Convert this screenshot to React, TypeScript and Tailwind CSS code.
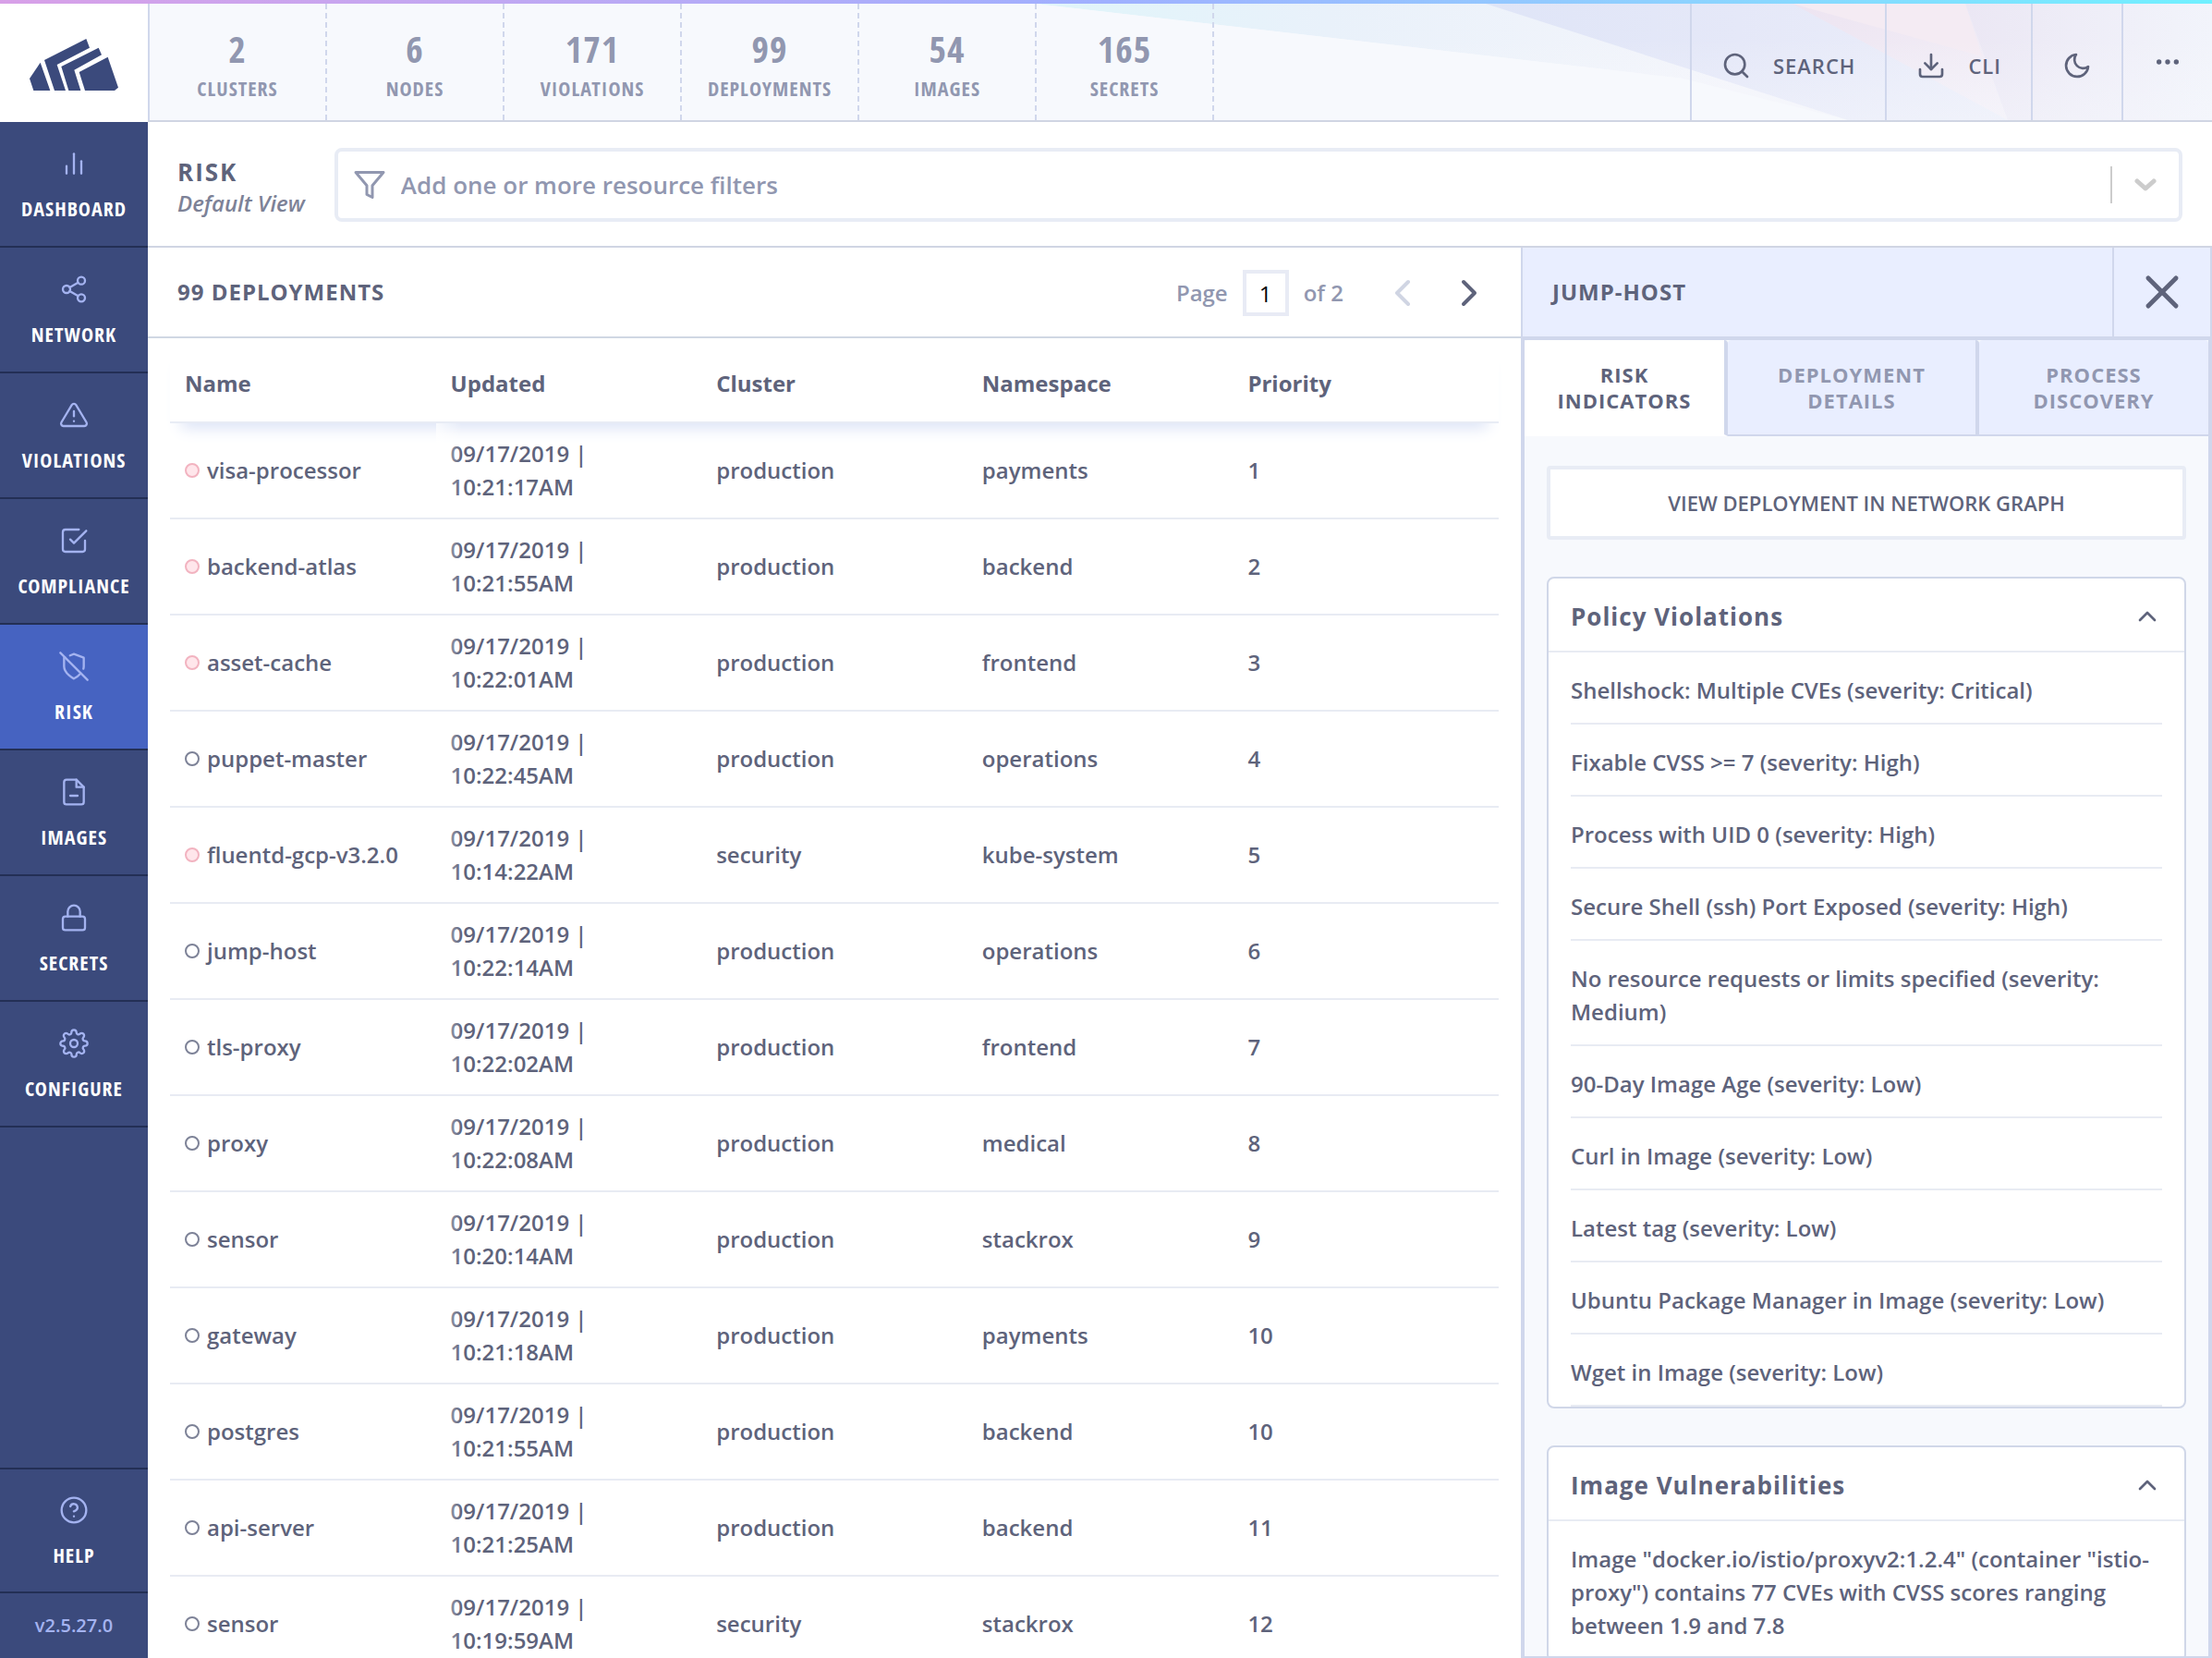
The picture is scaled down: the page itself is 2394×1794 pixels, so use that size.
import { useState } from "react";
import clsx from "clsx";
import {
	FiAlertTriangle,
	FiBarChart2,
	FiCheckSquare,
	FiChevronLeft,
	FiChevronRight,
	FiChevronUp,
	FiDownload,
	FiFileMinus,
	FiFilter,
	FiHelpCircle,
	FiLock,
	FiMoon,
	FiMoreHorizontal,
	FiSearch,
	FiSettings,
	FiShare2,
	FiShieldOff,
	FiX,
} from "react-icons/fi";

const navItems = [
	{ label: "Dashboard", Icon: FiBarChart2 },
	{ label: "Network", Icon: FiShare2 },
	{ label: "Violations", Icon: FiAlertTriangle },
	{ label: "Compliance", Icon: FiCheckSquare },
	{ label: "Risk", Icon: FiShieldOff },
	{ label: "Images", Icon: FiFileMinus },
	{ label: "Secrets", Icon: FiLock },
	{ label: "Configure", Icon: FiSettings },
];

const stats = [
	{ value: 2, label: "Clusters" },
	{ value: 6, label: "Nodes" },
	{ value: 171, label: "Violations" },
	{ value: 99, label: "Deployments" },
	{ value: 54, label: "Images" },
	{ value: 165, label: "Secrets" },
];

const columns = ["Name", "Updated", "Cluster", "Namespace", "Priority"];

const deployments = [
	{ name: "visa-processor", time: "10:21:17AM", cluster: "production", namespace: "payments", priority: 1, flagged: true },
	{ name: "backend-atlas", time: "10:21:55AM", cluster: "production", namespace: "backend", priority: 2, flagged: true },
	{ name: "asset-cache", time: "10:22:01AM", cluster: "production", namespace: "frontend", priority: 3, flagged: true },
	{ name: "puppet-master", time: "10:22:45AM", cluster: "production", namespace: "operations", priority: 4, flagged: false },
	{ name: "fluentd-gcp-v3.2.0", time: "10:14:22AM", cluster: "security", namespace: "kube-system", priority: 5, flagged: true },
	{ name: "jump-host", time: "10:22:14AM", cluster: "production", namespace: "operations", priority: 6, flagged: false },
	{ name: "tls-proxy", time: "10:22:02AM", cluster: "production", namespace: "frontend", priority: 7, flagged: false },
	{ name: "proxy", time: "10:22:08AM", cluster: "production", namespace: "medical", priority: 8, flagged: false },
	{ name: "sensor", time: "10:20:14AM", cluster: "production", namespace: "stackrox", priority: 9, flagged: false },
	{ name: "gateway", time: "10:21:18AM", cluster: "production", namespace: "payments", priority: 10, flagged: false },
	{ name: "postgres", time: "10:21:55AM", cluster: "production", namespace: "backend", priority: 10, flagged: false },
	{ name: "api-server", time: "10:21:25AM", cluster: "production", namespace: "backend", priority: 11, flagged: false },
	{ name: "sensor", time: "10:19:59AM", cluster: "security", namespace: "stackrox", priority: 12, flagged: false },
];

const tabs = ["Risk Indicators", "Deployment Details", "Process Discovery"];

const policyViolations = [
	"Shellshock: Multiple CVEs (severity: Critical)",
	"Fixable CVSS >= 7 (severity: High)",
	"Process with UID 0 (severity: High)",
	"Secure Shell (ssh) Port Exposed (severity: High)",
	"No resource requests or limits specified (severity: Medium)",
	"90-Day Image Age (severity: Low)",
	"Curl in Image (severity: Low)",
	"Latest tag (severity: Low)",
	"Ubuntu Package Manager in Image (severity: Low)",
	"Wget in Image (severity: Low)",
];

const imageVulnerabilities = [
	'Image "docker.io/istio/proxyv2:1.2.4" (container "istio-proxy") contains 77 CVEs with CVSS scores ranging between 1.9 and 7.8',
];

function Logo() {
	return (
		<svg viewBox="36 66 288 168" className="w-24 h-14" fill="#3b4a7c" role="img" aria-label="StackRox">
			<path d="M71 143 103 234H49L36 195Z" />
			<path d="M84 135 220 66 231 95 125 150 153 234H117Z" />
			<path d="M139 156 260 95 270 118 181 167 202 234H163Z" />
			<path d="M197 174 290 125 324 224 312 234H216Z" />
		</svg>
	);
}

// Translucent facets behind the right half of the top bar
function HeaderFacets() {
	return (
		<svg viewBox="0 0 1274 128" preserveAspectRatio="none" className="absolute top-0 right-0 w-[1274px] h-full" aria-hidden="true">
			<defs>
				<linearGradient id="facet-cyan" x1="0" y1="0" x2="1" y2="0">
					<stop offset="0" stopColor="#e0f5fa" />
					<stop offset="0.25" stopColor="#e9f1fa" />
					<stop offset="0.6" stopColor="#f4f5fb" />
				</linearGradient>
				<linearGradient id="facet-blue" x1="0" y1="0" x2="1" y2="0">
					<stop offset="0" stopColor="#dfe5f7" />
					<stop offset="0.35" stopColor="#e5e8f8" />
					<stop offset="1" stopColor="#f1f3fb" />
				</linearGradient>
				<linearGradient id="facet-pink" x1="0" y1="0" x2="1" y2="1">
					<stop offset="0" stopColor="#ede4f1" />
					<stop offset="1" stopColor="#f3f0f8" />
				</linearGradient>
				<linearGradient id="facet-lilac" x1="0" y1="0" x2="1" y2="0">
					<stop offset="0" stopColor="#ebe7f4" />
					<stop offset="1" stopColor="#f2f4fb" />
				</linearGradient>
				<linearGradient id="facet-fade" x1="0" y1="0" x2="0" y2="1">
					<stop offset="0.3" stopColor="#f7f9fd" stopOpacity="0" />
					<stop offset="1" stopColor="#f7f9fd" stopOpacity="0.4" />
				</linearGradient>
			</defs>
			<path d="M0 0H1274V128H880L700 82Z" fill="url(#facet-cyan)" />
			<path d="M0 0 700 82 880 128H0Z" fill="#f7f9fd" />
			<path d="M488 0H1274V128H880Z" fill="url(#facet-blue)" />
			<path d="M820 0H1007L1053 128Z" fill="url(#facet-pink)" />
			<path d="M820 0H1007L1025 58Z" fill="#f4ebf3" />
			<path d="M1007 0H1274V128H1053Z" fill="url(#facet-lilac)" />
			<path d="M0 0H1274V128H0Z" fill="url(#facet-fade)" />
		</svg>
	);
}

function TopBar() {
	return (
		<header className="relative flex-none flex h-32 bg-[#f7f9fd] border-b-2 border-[#d0d5e3]">
			<HeaderFacets />
			<a href="#home" className="relative flex-none w-40 -mb-0.5 pt-1 flex items-center justify-center bg-white">
				<Logo />
			</a>
			<ul className="relative flex border-l-2 border-[#d0d7ec]">
				{stats.map(({ value, label }) => (
					<li key={label} className="w-48 border-r-2 border-dashed border-[#d0d7ec]">
						<a href="#stat" className="h-full pt-3 flex flex-col items-center justify-center gap-1 font-['Open_Sans_Condensed','Open_Sans',sans-serif] font-bold uppercase text-[#9197b0] tracking-[1px]">
							<span className="text-[40px] leading-10">{value}</span>
							<span className="text-[22px] leading-9">{label}</span>
						</a>
					</li>
				))}
			</ul>
			<div className="relative ml-auto flex text-[22px] tracking-[1px] [&>button]:border-l-2 [&>button]:border-[#d0d7ec]">
				<button className="flex items-center gap-6 px-8 pt-2 uppercase">
					<FiSearch size={32} strokeWidth={2} />
					Search
				</button>
				<button className="flex items-center gap-6 px-8 pt-2 uppercase">
					<FiDownload size={32} strokeWidth={2} />
					CLI
				</button>
				<button className="px-8 pt-2" aria-label="Toggle dark mode">
					<FiMoon size={32} strokeWidth={2} />
				</button>
				<button className="px-8" aria-label="More">
					<FiMoreHorizontal size={32} strokeWidth={2} />
				</button>
			</div>
		</header>
	);
}

function Sidebar() {
	const itemClass = "h-[136px] pt-1 flex flex-col items-center justify-center gap-4 border-[#232f55] uppercase text-white tracking-[1px] font-['Open_Sans_Condensed','Open_Sans',sans-serif] font-bold text-[22px]";

	return (
		<nav className="flex-none w-40 flex flex-col bg-[#3b4a7c]">
			{navItems.map(({ label, Icon }) => (
				<a
					key={label}
					href={`#${label.toLowerCase()}`}
					className={clsx(itemClass, "border-b-2", label === "Risk" && "bg-[#4663c1]")}
				>
					<Icon size={32} strokeWidth={1.75} className="text-[#a4b3f0]" />
					<span className="leading-8">{label}</span>
				</a>
			))}
			<a href="#help" className={clsx(itemClass, "mt-auto border-y-2")}>
				<FiHelpCircle size={32} strokeWidth={1.75} className="text-[#a4b3f0]" />
				<span className="leading-8">Help</span>
			</a>
			<div className="flex-none h-[70px] flex items-center justify-center text-xl font-semibold text-[#a4b3f0]">v2.5.27.0</div>
		</nav>
	);
}

function PageHeader() {
	return (
		<div className="flex-none flex items-center gap-8 h-[136px] px-8 pt-0.5 border-b-2 border-[#d0d5e3]">
			<div className="flex-none pt-2">
				<h1 className="text-[26px] leading-8 font-bold uppercase tracking-[2px]">Risk</h1>
				<p className="text-2xl leading-9 italic text-[#7d8297]">Default View</p>
			</div>
			<label className="flex-1 h-20 flex items-center gap-6 px-5 bg-white border-4 border-[#e8ecf5] rounded-lg">
				<span className="flex-1 flex items-center gap-3">
					<FiFilter size={36} strokeWidth={2} className="flex-none -ml-1 text-[#9197b0]" />
					<input
						className="flex-1 min-w-0 outline-none text-[26px] placeholder:text-[#9197b0] pl-1"
						placeholder="Add one or more resource filters"
					/>
				</span>
				<span className="w-0.5 h-10 bg-[#cccccc]" />
				<svg viewBox="0 0 24 14" className="w-6 h-3.5 mr-1" fill="none" stroke="#cccccc" strokeWidth="5" strokeLinecap="round" strokeLinejoin="round">
					<path d="M3 3 12 11 21 3" />
				</svg>
			</label>
		</div>
	);
}

// Soft white edge where the name column meets the next one
function ColumnFade() {
	return <span className="absolute top-0 bottom-1 left-full w-7 bg-linear-to-r from-white/70 to-transparent pointer-events-none" />;
}

function DeploymentTable() {
	return (
		<div className="flex-1 min-h-0 px-6 overflow-hidden">
			<table className="w-full table-fixed text-2xl leading-9 text-left">
				<thead>
					<tr className="h-[91px] shadow-[0_18px_16px_-12px_#dae2f6] border-b-2 border-[#e8ecf5]">
						{columns.map((column, i) => (
							<th key={column} className="relative px-4 pt-2 font-bold">
								{column}
								{i === 0 && <ColumnFade />}
							</th>
						))}
					</tr>
				</thead>
				<tbody>
					{deployments.map((row) => (
						<tr key={row.priority + row.name} className="h-[104px] border-b-2 border-[#e8ebf3]">
							<td className="relative px-4 whitespace-nowrap">
								<span className="flex items-center gap-2">
									<span
										className={clsx(
											"w-4 h-4 border-2 rounded-full",
											row.flagged ? "bg-[#ffe6eb] border-[#f2b3c0]" : "border-[#7d8297]"
										)}
									/>
									{row.name}
								</span>
								<ColumnFade />
							</td>
							<td className="px-4">09/17/2019 |<br />{row.time}</td>
							<td className="px-4">{row.cluster}</td>
							<td className="px-4">{row.namespace}</td>
							<td className="px-4">{row.priority}</td>
						</tr>
					))}
				</tbody>
			</table>
		</div>
	);
}

function Deployments() {
	const [page, setPage] = useState("1");

	return (
		<section className="flex-1 min-w-0 flex flex-col">
			<div className="flex-none h-[98px] flex items-center px-8 border-b-2 border-[#d0d7e3]">
				<h2 className="text-2xl font-bold uppercase tracking-[1px]">99 Deployments</h2>
				<div className="ml-auto flex items-center pt-0.5 text-2xl text-[#9197b0]">
					<label htmlFor="page">Page</label>
					<input
						id="page"
						value={page}
						onChange={(e) => setPage(e.target.value)}
						className="w-[50px] h-[50px] mx-4 border-4 border-[#e8ebf5] text-center font-normal text-black outline-none"
					/>
					<span>of 2</span>
					<button className="ml-10 text-[#d0d5e3]" aria-label="Previous page"><FiChevronLeft size={48} strokeWidth={2} /></button>
					<button className="ml-6 text-[#5e637b]" aria-label="Next page"><FiChevronRight size={48} strokeWidth={2} /></button>
				</div>
			</div>
			<DeploymentTable />
		</section>
	);
}

function Card({ title, items }: { title: string; items: string[] }) {
	const [open, setOpen] = useState(true);

	return (
		<div className="bg-white border-2 border-[#d0d7e8] rounded-lg">
			<button
				onClick={() => setOpen(!open)}
				className="w-full h-20 flex items-center justify-between px-6 pt-1 border-b-2 border-[#e8ebf3] text-[26px] font-bold tracking-[1px]"
			>
				{title}
				<FiChevronUp size={32} strokeWidth={2} className={clsx(!open && "rotate-180")} />
			</button>
			{open &&
				<ul className="px-6 text-2xl leading-9">
					{items.map((item) => (
						<li key={item} className="pt-[23px] pb-[17px] border-b-2 border-[#e8ebf3]">{item}</li>
					))}
				</ul>
			}
		</div>
	);
}

function DetailPanel() {
	const [tab, setTab] = useState(tabs[0]);

	return (
		<aside className="flex-none w-[748px] flex flex-col border-x-2 border-b-2 border-[#d0d7ec] bg-[#f7f9fd]">
			<div className="flex-none h-24 flex items-stretch bg-[#e9eeff]">
				<h2 className="flex-1 flex items-center pl-8 text-2xl font-bold uppercase tracking-[1px]">Jump-Host</h2>
				<button className="w-[106px] flex items-center justify-center border-l-2 border-[#d0d7ec]" aria-label="Close">
					<FiX size={60} strokeWidth={2} />
				</button>
			</div>
			<div className="flex-1 min-h-0 flex flex-col border-x-2 border-[#d0d7ec]">
				<div className="flex-none h-[108px] grid grid-cols-[220fr_272fr_248fr] border-t-4 border-[#d0d7ec]" role="tablist">
					{tabs.map((name) => (
						<button
							key={name}
							role="tab"
							aria-selected={name === tab}
							onClick={() => setTab(name)}
							className={clsx(
								"px-8 border-b-2 rounded-t-sm text-[22px] leading-7 font-bold uppercase tracking-[1px] border-[#d0d7ec] border-r-4 last:border-r-0",
								name === tab ? "bg-white border-b-white" : "bg-[#e9eeff] text-[#9197b0]"
							)}
						>
							{name}
						</button>
					))}
				</div>
				<div className="flex-1 min-h-0 flex flex-col gap-10 px-6 pt-8 overflow-hidden [&>*]:flex-none">
					<button className="h-20 bg-white border-4 border-[#e8ecf5] rounded-sm text-[22px] uppercase">
						View Deployment in Network Graph
					</button>
					<Card title="Policy Violations" items={policyViolations} />
					<Card title="Image Vulnerabilities" items={imageVulnerabilities} />
				</div>
			</div>
		</aside>
	);
}

export default function App() {
	return (
		<div className="h-screen flex flex-col overflow-hidden bg-white font-['Open_Sans',sans-serif] font-semibold text-[#5e637b]">
			<div className="flex-none h-1 bg-linear-to-r from-[#d8a0e8] via-[#9fb0ff] to-[#70f0ff]" />
			<TopBar />
			<div className="flex-1 min-h-0 flex">
				<Sidebar />
				<main className="flex-1 min-w-0 flex flex-col">
					<PageHeader />
					<div className="flex-1 min-h-0 flex">
						<Deployments />
						<DetailPanel />
					</div>
				</main>
			</div>
		</div>
	);
}
